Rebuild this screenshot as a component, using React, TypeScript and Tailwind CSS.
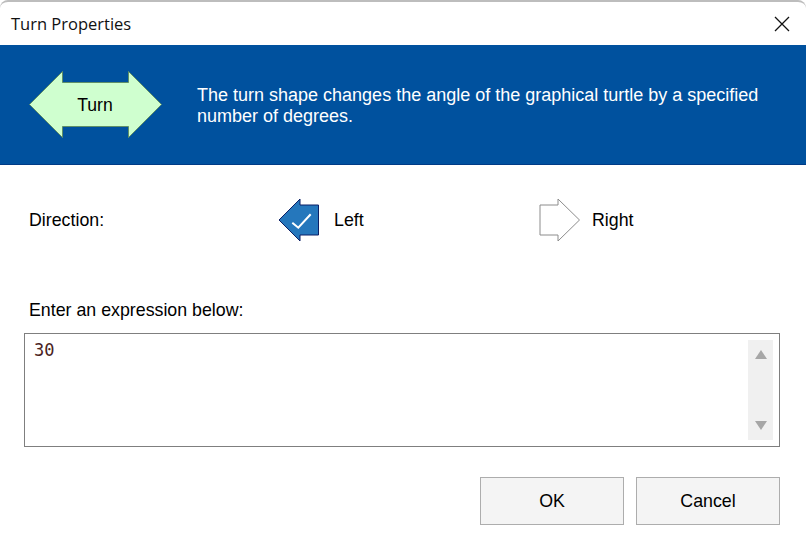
const SANS = "font-['Liberation_Sans',Arial,sans-serif]";

function TurnShape() {
  return (
    <div className="relative h-[68px] w-[134px] shrink-0">
      <svg width="134" height="68" viewBox="0 0 134 68" className="block">
        <path
          d="M0.5 33.5 L33.5 0.5 V11.5 H99.5 V0.5 L132.5 33.5 L99.5 66.5 V55.5 H33.5 V66.5 Z"
          fill="#CFFFCF"
          stroke="#5F8F68"
          strokeWidth="1"
        />
      </svg>
      <span className="absolute inset-x-0 top-[24px] pr-[2px] text-center text-[17.6px] leading-[20px] text-black">Turn</span>
    </div>
  );
}

function LeftArrow() {
  return (
    <svg width="42" height="44" viewBox="0 0 42 44" className="block shrink-0">
      <path d="M1 22 L22 1 V7 H40.5 V37 H22 V43 Z" fill="#2577BC" stroke="#0B1F66" strokeWidth="1" />
      <path d="M14.3 24.7 L20.3 29.7 L32.7 16.3" fill="none" stroke="#fff" strokeWidth="2" />
    </svg>
  );
}

function RightArrow() {
  return (
    <svg width="42" height="44" viewBox="0 0 42 44" className="block shrink-0">
      <path d="M1 7 H19 V1 L40.5 22 L19 43 V37 H1 Z" fill="#fff" stroke="#8C8C8C" strokeWidth="1" />
    </svg>
  );
}

export default function App() {
  return (
    <div className={`flex h-[540px] w-[806px] flex-col overflow-hidden bg-white text-black ${SANS}`}>
      <div className="flex h-[45px] shrink-0 items-center justify-between rounded-t-[8px] border-t-2 border-[#BDBDBD] pl-[11px] pr-[16px]">
        <span className="font-['Open_Sans',sans-serif] text-[16.5px] leading-[20px] text-[#111]">Turn Properties</span>
        <svg width="16" height="16" viewBox="0 0 16 16" className="block">
          <path d="M1 1 L15 15 M15 1 L1 15" stroke="#111" strokeWidth="1.3" fill="none" />
        </svg>
      </div>

      <div className="flex h-[120px] shrink-0 items-center border-b border-[#003B86] bg-[#00519E] pl-[29px]">
        <TurnShape />
        <p className="ml-[34px] w-[580px] pt-[2px] text-[18px] leading-[21px] text-white">
          The turn shape changes the angle of the graphical turtle by a specified number of degrees.
        </p>
      </div>

      <div className="mt-[33px] flex h-[44px] shrink-0 items-center pl-[29px] text-[17.8px]">
        <span className="w-[249px]">Direction:</span>
        <div className="flex w-[261px] items-center gap-[14px]">
          <LeftArrow />
          <span>Left</span>
        </div>
        <div className="flex items-center gap-[11px]">
          <RightArrow />
          <span>Right</span>
        </div>
      </div>

      <div className="mt-[58px] h-[20px] shrink-0 pl-[29px] text-[17.8px] leading-[20px]">Enter an expression below:</div>

      <div className="ml-[24px] mt-[13px] flex h-[114px] w-[756px] shrink-0 justify-between border border-[#7F7F7F] pl-[9px] pr-[6px] pt-[6px]">
        <span className="font-['DejaVu_Sans_Mono',monospace] text-[17px] leading-[20px] text-[#4A2222]">30</span>
        <div className="flex h-[100px] w-[25px] flex-col items-center justify-between bg-[#F0F0F0] py-[10px]">
          <svg width="12" height="9" viewBox="0 0 12 9" className="block">
            <path d="M6 0 L12 9 H0 Z" fill="#A6A6A6" />
          </svg>
          <svg width="12" height="9" viewBox="0 0 12 9" className="block">
            <path d="M0 0 H12 L6 9 Z" fill="#A6A6A6" />
          </svg>
        </div>
      </div>

      <div className="mr-[26px] mt-[30px] flex shrink-0 justify-end gap-[12px] text-[17.8px]">
        <button className="h-[48px] w-[144px] border border-[#ADADAD] bg-[#F4F4F4]">OK</button>
        <button className="h-[48px] w-[144px] border border-[#ADADAD] bg-[#F4F4F4]">Cancel</button>
      </div>
    </div>
  );
}
